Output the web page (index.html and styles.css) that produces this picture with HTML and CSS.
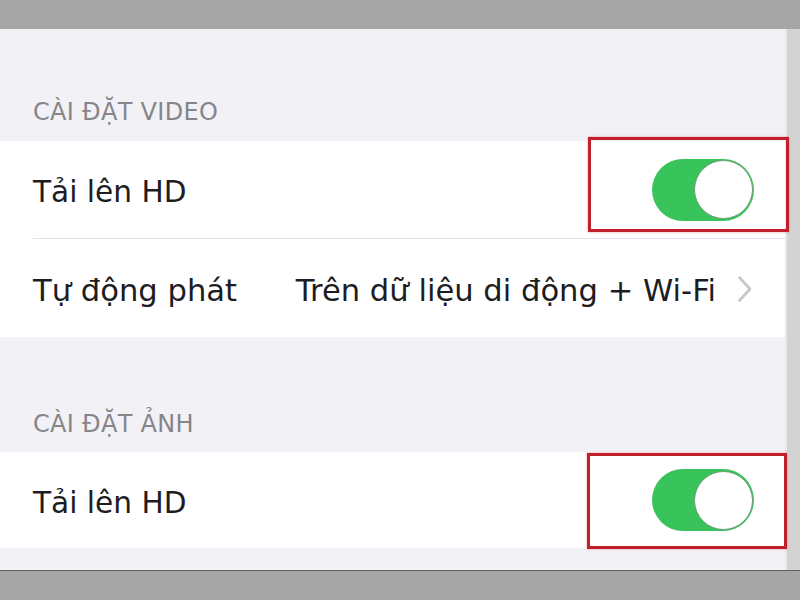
FILE: index.html
```html
<!DOCTYPE html>
<html lang="vi">
<head>
<meta charset="utf-8">
<title>Cài đặt</title>
<link rel="stylesheet" href="styles.css">
</head>
<body>
<div class="screen">
  <div class="topbar"></div>
  <div class="middle">
    <div class="content">
      <div class="section-header first">CÀI ĐẶT VIDEO</div>
      <div class="group">
        <div class="row">
          <span class="label">Tải lên HD</span>
          <span class="switch"><span class="knob"></span></span>
          <span class="mark mark-video"></span>
        </div>
        <div class="divider"></div>
        <div class="row row-tall">
          <span class="label">Tự động phát</span>
          <span class="value">Trên dữ liệu di động + Wi-Fi</span>
          <svg class="chevron" width="16" height="28" viewBox="0 0 16 28" aria-hidden="true">
            <polyline points="2.5,2.5 13,14 2.5,25.5" fill="none" stroke="#c6c6ca" stroke-width="2.6" stroke-linecap="round" stroke-linejoin="round"/>
          </svg>
        </div>
      </div>
      <div class="section-header second">CÀI ĐẶT ẢNH</div>
      <div class="group">
        <div class="row row-short">
          <span class="label">Tải lên HD</span>
          <span class="switch"><span class="knob"></span></span>
          <span class="mark mark-photo"></span>
        </div>
      </div>
    </div>
    <div class="edge"></div>
  </div>
  <div class="bottombar"></div>
</div>
</body>
</html>
```

FILE: styles.css
```css
html, body {
  margin: 0;
  padding: 0;
}

body {
  font-family: "DejaVu Sans", "Liberation Sans", sans-serif;
  background: #a6a6a6;
}

.screen {
  width: 800px;
  height: 600px;
  display: flex;
  flex-direction: column;
  overflow: hidden;
}

.topbar {
  height: 29px;
  flex: none;
  background: #a6a6a6;
}

.middle {
  height: 541px;
  flex: none;
  display: flex;
}

.content {
  flex: 1;
  background: #f2f2f6;
  display: flex;
  flex-direction: column;
}

.edge {
  width: 13px;
  flex: none;
  background: #d3d3d4;
  border-left: 2px solid #e9e9ec;
}

.bottombar {
  flex: 1;
  background: #a6a6a6;
  border-top: 1px solid #5f5f5f;
}

.section-header {
  box-sizing: border-box;
  padding-left: 33px;
  font-size: 24px;
  line-height: 24px;
  color: #85858a;
  letter-spacing: 0.3px;
}

.section-header.first {
  height: 112px;
  padding-top: 71px;
}

.section-header.second {
  height: 115px;
  padding-top: 75px;
}

.group {
  background: #ffffff;
  display: flex;
  flex-direction: column;
}

.row {
  position: relative;
  box-sizing: border-box;
  height: 97px;
  padding-left: 33px;
  padding-right: 31px;
  display: flex;
  align-items: center;
}

.row-tall {
  height: 98px;
  padding-right: 32px;
}

.row-short {
  height: 96px;
}

.divider {
  height: 1px;
  margin-left: 33px;
  background: #e2e2e6;
}

.label,
.value {
  font-size: 29.6px;
  color: #1d1d1f;
  padding-top: 5px;
  white-space: nowrap;
}

.row-tall .label,
.row-tall .value {
  font-size: 30.6px;
}

.value {
  margin-left: auto;
}

.chevron {
  flex: none;
  margin-left: 21px;
  margin-top: 2px;
}

.switch {
  margin-left: auto;
  flex: none;
  box-sizing: border-box;
  width: 102px;
  height: 62px;
  border-radius: 31px;
  background: #39c35b;
  display: flex;
  align-items: center;
  justify-content: flex-end;
  padding-right: 1px;
}

.knob {
  box-sizing: border-box;
  width: 59px;
  height: 59px;
  border-radius: 50%;
  background: #ffffff;
  border: 1.5px solid #6f9a78;
}

.mark {
  position: absolute;
  box-sizing: border-box;
  border: 3px solid #c0202b;
  box-shadow: 0 0 2px rgba(230, 60, 70, 0.55);
  pointer-events: none;
}

.mark-video {
  left: 588px;
  top: -4px;
  width: 201px;
  height: 95px;
}

.mark-photo {
  left: 587px;
  top: 1px;
  width: 200px;
  height: 96px;
}
```
